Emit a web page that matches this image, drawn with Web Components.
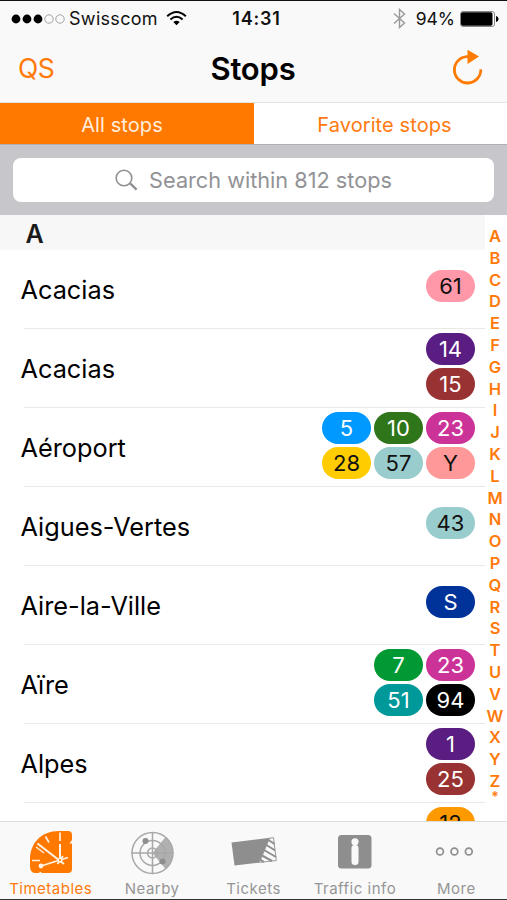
<!DOCTYPE html>
<html lang="en">
<head>
<meta charset="utf-8">
<meta name="viewport" content="width=device-width, initial-scale=1">
<title>Stops</title>
<style>
    html, body {
        margin: 0;
        height: 100%;
        overflow: hidden;
    }

    body {
        --accent: #ff7a0a;
        font-family: Inter, "Liberation Sans", sans-serif;
        color: #000;
        background: #fff;
    }
</style>
</head>
<body>
<stops-app></stops-app>

<script>
class StatusBar extends HTMLElement {
    constructor() {
        super();
        this.attachShadow({ mode: 'open' });
    }

    connectedCallback() {
        this.shadowRoot.innerHTML = /*html*/`
            <style>
                :host {
                    display: grid;
                    grid-template-columns: 1fr auto 1fr;
                    align-items: center;
                    height: 34px;
                    padding: 0 8px 0 11px;
                    font-size: 17.5px;
                    line-height: 35px;
                    color: #111;
                }

                div {
                    display: flex;
                    align-items: center;
                }

                .carrier {
                    margin-left: 4px;
                    font-size: 18px;
                    letter-spacing: 0.3px;
                }

                .wifi {
                    margin-left: 8.5px;
                    margin-top: -2px;
                }

                .time {
                    font-weight: 600;
                    font-size: 18px;
                    letter-spacing: 0.8px;
                    padding-left: 3px;
                }

                .right {
                    justify-content: flex-end;
                }

                .level {
                    margin: 0 5px 0 10px;
                }

                svg {
                    flex: none;
                }
            </style>

            <div>
                <svg width="54" height="10" viewBox="0 0 54 10">
                    <g fill="#000">
                        <circle cx="5" cy="5" r="4.4"/>
                        <circle cx="16" cy="5" r="4.4"/>
                        <circle cx="27" cy="5" r="4.4"/>
                    </g>
                    <g fill="none" stroke="#999" stroke-width="0.9">
                        <circle cx="38" cy="5" r="4.2"/>
                        <circle cx="49" cy="5" r="4.2"/>
                    </g>
                </svg>
                <span class="carrier">Swisscom</span>
                <svg class="wifi" width="21" height="16" viewBox="0 0 21 16">
                    <g fill="none" stroke="#000" stroke-width="2">
                        <path d="M1.2 6.2 Q10.5 -2.2 19.8 6.2"/>
                        <path d="M4.4 9.6 Q10.5 4 16.6 9.6"/>
                    </g>
                    <path d="M7.3 12 Q10.5 9.4 13.7 12 L10.5 15.2 Z"/>
                </svg>
            </div>
            <span class="time">14:31</span>
            <div class="right">
                <svg width="13" height="21" viewBox="0 0 13 21">
                    <path d="M1 5.5 L11.5 15 L6.5 19.5 V1.5 L11.5 6 L1 15.5" fill="none" stroke="#999" stroke-width="1.4"/>
                </svg>
                <span class="level">94%</span>
                <svg width="39" height="16" viewBox="0 0 39 16">
                    <rect x="0.5" y="0.5" width="34" height="15" rx="2.5" fill="#fff" stroke="#888"/>
                    <rect x="1" y="1.3" width="31.5" height="13.4" rx="1.6"/>
                    <path d="M36 5 Q38.6 5.5 38.6 8 T36 11 Z"/>
                </svg>
            </div>
        `;
    }
}

class NavBar extends HTMLElement {
    constructor() {
        super();
        this.attachShadow({ mode: 'open' });
    }

    connectedCallback() {
        this.shadowRoot.innerHTML = /*html*/`
            <style>
                :host {
                    display: grid;
                    grid-template-columns: 1fr auto 1fr;
                    align-items: center;
                    height: 67px;
                    padding: 0 24px 0 18px;
                }

                .action {
                    color: var(--accent);
                    font-size: 26.5px;
                    letter-spacing: -0.5px;
                    padding-bottom: 2px;
                }

                .title {
                    font-size: 31px;
                    font-weight: 600;
                    letter-spacing: -0.2px;
                    padding-left: 5px;
                    padding-bottom: 1px;
                }

                svg {
                    justify-self: end;
                    margin-bottom: 3px;
                }
            </style>

            <span class="action">QS</span>
            <span class="title"><slot></slot></span>
            <svg width="32" height="36" viewBox="0 0 32 36">
                <path d="M17.5 7.6 H16 A13.2 13.2 0 1 0 29.8 20.4" fill="none" stroke="#ff7a00" stroke-width="2.8"/>
                <path d="M16.5 0.8 L28 7.6 L16.5 15 Z" fill="#ff7a00"/>
            </svg>
        `;
    }
}

class SegmentTabs extends HTMLElement {
    constructor() {
        super();
        this.attachShadow({ mode: 'open' });
    }

    connectedCallback() {
        this.shadowRoot.innerHTML = /*html*/`
            <style>
                :host {
                    display: grid;
                    grid-template-columns: 254px 1fr;
                    height: 41px;
                    line-height: 44px;
                    text-align: center;
                    font-size: 20px;
                    border-top: 1px solid #e4e4e4;
                }

                span {
                    height: 41px;
                    padding-right: 10px;
                    background: #ff7800;
                    color: #ffeedd;
                    letter-spacing: 0.1px;
                }

                span + span {
                    padding: 0 0 0 8px;
                    background: #fff;
                    color: #ff7a10;
                }
            </style>

            <span>All stops</span><span>Favorite stops</span>
        `;
    }
}

class SearchField extends HTMLElement {
    constructor() {
        super();
        this.attachShadow({ mode: 'open' });
    }

    connectedCallback() {
        this.shadowRoot.innerHTML = /*html*/`
            <style>
                :host {
                    display: block;
                    box-sizing: border-box;
                    height: 71px;
                    padding: 13px 13px 14px;
                    background: #c7c6cb;
                    border-top: 1px solid #b0b0b3;
                }

                .field {
                    display: flex;
                    align-items: center;
                    justify-content: center;
                    gap: 11px;
                    height: 44px;
                    border-radius: 8px;
                    background: #fff;
                    color: #929296;
                    font-size: 21.7px;
                }
            </style>

            <div class="field">
                <svg width="23" height="22" viewBox="0 0 23 22" fill="none" stroke="#8e8e93">
                    <circle cx="9" cy="9" r="7.8" stroke-width="1.6"/>
                    <path d="M14.8 14.2 L21.6 20.6" stroke-width="2.3"/>
                </svg>
                <span><slot></slot></span>
            </div>
        `;
    }
}

class LineBadge extends HTMLElement {
    constructor() {
        super();
        this.attachShadow({ mode: 'open' });
    }

    connectedCallback() {
        this.shadowRoot.innerHTML = /*html*/`
            <style>
                :host {
                    display: block;
                    width: 49px;
                    height: 32px;
                    border-radius: 16px;
                    line-height: 33px;
                    text-align: center;
                    font-size: 22px;
                    background: ${this.getAttribute('bg')};
                    color: ${this.hasAttribute('dark') ? '#111' : '#fff'};
                }
            </style>
            <slot></slot>
        `;
    }
}

class StopRow extends HTMLElement {
    constructor() {
        super();
        this.attachShadow({ mode: 'open' });
    }

    connectedCallback() {
        const count = this.children.length;
        const columns = count > 1 ? Math.ceil(count / 2) : 1;

        this.shadowRoot.innerHTML = /*html*/`
            <style>
                :host {
                    display: flex;
                    justify-content: space-between;
                    height: 79px;
                    padding: 0 10px 0 20.5px;
                    box-sizing: border-box;
                    background: linear-gradient(#e9e9eb, #e9e9eb) 24px 100% / 100% 1px no-repeat;
                }

                .name {
                    font-size: 25.3px;
                    line-height: 79px;
                    white-space: nowrap;
                }

                .lines {
                    display: grid;
                    grid-template-columns: repeat(${columns}, 49px);
                    gap: 3px;
                    align-content: start;
                    padding-top: ${count > 1 ? 4 : 20}px;
                }
            </style>

            <span class="name">${this.getAttribute('name')}</span>
            <div class="lines"><slot></slot></div>
        `;
    }
}

class AlphaIndex extends HTMLElement {
    constructor() {
        super();
        this.attachShadow({ mode: 'open' });
    }

    connectedCallback() {
        const letters = 'ABCDEFGHIJKLMNOPQRSTUVWXYZ'.split('');

        this.shadowRoot.innerHTML = /*html*/`
            <style>
                :host {
                    display: flex;
                    flex-direction: column;
                    align-items: center;
                    width: 20px;
                    padding-top: 11px;
                    color: var(--accent);
                    font-size: 16.5px;
                    font-weight: 600;
                }

                span {
                    height: 21.8px;
                    line-height: 21.8px;
                }

                .star {
                    height: 12px;
                    line-height: 8px;
                    font-size: 14px;
                }
            </style>
            ${letters.map(l => `<span>${l}</span>`).join('')}
            <span class="star">*</span>
        `;
    }
}

class TabItem extends HTMLElement {
    constructor() {
        super();
        this.attachShadow({ mode: 'open' });
    }

    connectedCallback() {
        this.shadowRoot.innerHTML = /*html*/`
            <style>
                :host {
                    display: flex;
                    flex-direction: column;
                    align-items: center;
                    flex: 1 1 0;
                    min-width: 0;
                    padding-top: 6px;
                    color: #969696;
                    font-size: 15px;
                    letter-spacing: 0.5px;
                }

                :host([active]) {
                    color: var(--accent);
                }

                .icon {
                    height: 48px;
                }

                .label {
                    line-height: 26px;
                    white-space: nowrap;
                }
            </style>
            <div class="icon"><slot name="icon"></slot></div>
            <span class="label"><slot></slot></span>
        `;
    }
}

class TabBar extends HTMLElement {
    constructor() {
        super();
        this.attachShadow({ mode: 'open' });
    }

    connectedCallback() {
        // every icon is drawn in a 48 x 48 box
        this.shadowRoot.innerHTML = /*html*/`
            <style>
                :host {
                    display: flex;
                    box-sizing: border-box;
                    height: 78px;
                    border-top: 1px solid #dcdcdc;
                    background: #f9f9f9;
                }

                svg {
                    display: block;
                }
            </style>

            <tab-item active>
                <svg slot="icon" width="48" height="48" viewBox="0 0 48 48">
                    <path d="M32 3 H41 Q45 3 45 7 V12 L42.5 15.5 H45 V41 Q45 45 41 45 H15 L13 43.5 L12 45 H8 Q3 45 3 38 V32 C3 15 14 3 32 3 Z" fill="#ff7800"/>
                    <g fill="none" stroke="#fff3e4">
                        <path d="M33 4.5 V13 M18.5 8.5 L22 14.5 M5 32.5 H13" stroke-width="1.7"/>
                        <path d="M33 16 V32" stroke-width="2"/>
                        <path d="M10.5 15.5 L37 36" stroke-width="2"/>
                        <path d="M9 19 L17 25" stroke-width="1.3"/>
                        <path d="M14 38 L41 29.5 M30.5 36 L36 28" stroke-width="1.8"/>
                    </g>
                    <circle cx="14" cy="38" r="2.4" fill="#fff3e4"/>
                    <circle cx="33" cy="32" r="2.6" fill="#fff3e4"/>
                    <circle cx="33" cy="32" r="1" fill="#ff7800"/>
                </svg>
                Timetables
            </tab-item>
            <tab-item>
                <svg slot="icon" width="48" height="48" viewBox="0 0 48 48">
                    <path d="M24.5 25 L37.5 9 A21 21 0 0 1 37.5 41 Z" fill="#b0b0b0"/>
                    <g fill="none" stroke="#a8a8a8" stroke-width="1.5">
                        <circle cx="24.5" cy="25" r="20.5"/>
                        <circle cx="24.5" cy="25" r="12.5"/>
                        <circle cx="24.5" cy="25" r="5"/>
                        <path d="M24.5 4 V46 M3.5 25 H45.5"/>
                    </g>
                    <circle cx="17.5" cy="13" r="3" fill="#8e8e8e"/>
                    <circle cx="34.5" cy="33.5" r="3" fill="#8e8e8e"/>
                </svg>
                Nearby
            </tab-item>
            <tab-item>
                <svg slot="icon" width="48" height="48" viewBox="0 0 48 48">
                    <path d="M1.5 14.5 L40 9.7 L29 34.7 L4.5 37.5 Z" fill="#8e8e8e"/>
                    <path d="M39.5 10.2 L43.5 9.7 L46.3 32.5 L29.5 34.4 Z" fill="#f9f9f9" stroke="#8e8e8e" stroke-width="0.9"/>
                    <path d="M38.5 12 L44.5 16 M36.5 17 L45.2 22.5 M34 22 L46 29 M32 27.5 L42 33 M30.5 31.8 L34 34" stroke="#8e8e8e" stroke-width="2"/>
                </svg>
                Tickets
            </tab-item>
            <tab-item>
                <svg slot="icon" width="48" height="48" viewBox="0 0 48 48">
                    <rect x="7" y="7" width="33.5" height="33.5" rx="3.5" fill="#8e8e8e"/>
                    <circle cx="24" cy="13.8" r="3.6" fill="#f9f9f9"/>
                    <rect x="20.5" y="17" width="7" height="20" rx="3.3" fill="#f9f9f9"/>
                </svg>
                Traffic info
            </tab-item>
            <tab-item>
                <svg slot="icon" width="48" height="48" viewBox="0 0 48 48" fill="none" stroke="#8e8e8e" stroke-width="1.7">
                    <circle cx="8" cy="23.5" r="3.4"/>
                    <circle cx="22.4" cy="23.5" r="3.4"/>
                    <circle cx="36.8" cy="23.5" r="3.4"/>
                </svg>
                More
            </tab-item>
        `;
    }
}

class StopsApp extends HTMLElement {
    constructor() {
        super();
        this.attachShadow({ mode: 'open' });
    }

    connectedCallback() {
        this.shadowRoot.innerHTML = /*html*/`
            <style>
                :host {
                    display: flex;
                    flex-direction: column;
                    box-sizing: border-box;
                    height: 900px;
                    border-top: 1px solid #111;
                    border-bottom: 1px solid #333;
                }

                header {
                    background: #f9f9f9;
                }

                main {
                    flex: 1;
                    display: flex;
                    min-height: 0;
                    overflow: hidden;
                }

                .list {
                    width: 485px;
                }

                h2 {
                    margin: 0;
                    height: 35px;
                    padding-left: 25.5px;
                    background: #f7f7f7;
                    font-size: 25px;
                    font-weight: 600;
                    line-height: 38px;
                    color: #1a1a1a;
                }
            </style>

            <header>
                <status-bar></status-bar>
                <nav-bar>Stops</nav-bar>
                <segment-tabs></segment-tabs>
            </header>
            <search-field>Search within 812 stops</search-field>
            <main>
                <div class="list">
                    <h2>A</h2>
                    <stop-row name="Acacias">
                        <line-badge bg="#ff99aa" dark>61</line-badge>
                    </stop-row>
                    <stop-row name="Acacias">
                        <line-badge bg="#5a1e82">14</line-badge>
                        <line-badge bg="#993333">15</line-badge>
                    </stop-row>
                    <stop-row name="Aéroport">
                        <line-badge bg="#0099ff">5</line-badge>
                        <line-badge bg="#2f7519">10</line-badge>
                        <line-badge bg="#cc3399">23</line-badge>
                        <line-badge bg="#ffcc00" dark>28</line-badge>
                        <line-badge bg="#99cccc" dark>57</line-badge>
                        <line-badge bg="#ff9999" dark>Y</line-badge>
                    </stop-row>
                    <stop-row name="Aigues-Vertes">
                        <line-badge bg="#99cccc" dark>43</line-badge>
                    </stop-row>
                    <stop-row name="Aire-la-Ville">
                        <line-badge bg="#003399">S</line-badge>
                    </stop-row>
                    <stop-row name="Aïre">
                        <line-badge bg="#009933">7</line-badge>
                        <line-badge bg="#cc3399">23</line-badge>
                        <line-badge bg="#009999">51</line-badge>
                        <line-badge bg="#000000">94</line-badge>
                    </stop-row>
                    <stop-row name="Alpes">
                        <line-badge bg="#5a1e82">1</line-badge>
                        <line-badge bg="#993333">25</line-badge>
                    </stop-row>
                    <stop-row name="">
                        <line-badge bg="#ff9900" dark>12</line-badge>
                        <line-badge bg="#ff9900" dark></line-badge>
                    </stop-row>
                </div>
                <alpha-index></alpha-index>
            </main>
            <tab-bar></tab-bar>
        `;
    }
}

customElements.define('status-bar', StatusBar);
customElements.define('nav-bar', NavBar);
customElements.define('segment-tabs', SegmentTabs);
customElements.define('search-field', SearchField);
customElements.define('line-badge', LineBadge);
customElements.define('stop-row', StopRow);
customElements.define('alpha-index', AlphaIndex);
customElements.define('tab-item', TabItem);
customElements.define('tab-bar', TabBar);
customElements.define('stops-app', StopsApp);
</script>
</body>
</html>
